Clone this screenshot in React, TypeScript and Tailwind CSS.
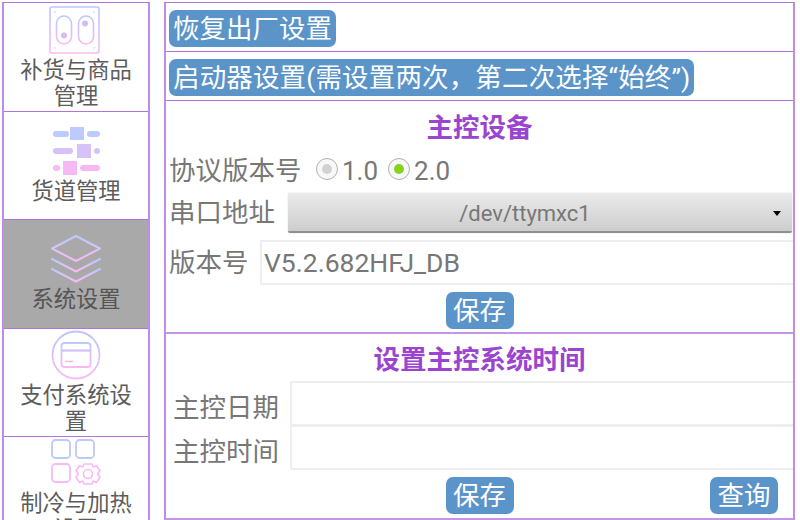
import type { ReactNode } from 'react';

const fontStack = 'font-["Roboto","Noto_Sans_CJK_SC",sans-serif]';

function Grad({ id }: { id: string }) {
  return (
    <defs>
      <linearGradient id={id} x1="0" y1="0" x2="0" y2="1">
        <stop offset="0" stopColor="#b9c9fe" />
        <stop offset="1" stopColor="#fab8f3" />
      </linearGradient>
    </defs>
  );
}

function SlotIcon() {
  return (
    <svg width="52" height="48" viewBox="0 0 52 48" fill="none">
      <Grad id="g1" />
      <g stroke="url(#g1)" strokeWidth="1.6">
        <rect x="1" y="1" width="49" height="46" rx="2" />
        <rect x="7.5" y="10" width="15" height="28" rx="7.5" />
        <rect x="29.5" y="10" width="15" height="28" rx="7.5" />
      </g>
      <circle cx="15" cy="29.5" r="3" fill="#d9b9f8" />
      <circle cx="36" cy="17.5" r="3" fill="#cdbdfa" />
      <circle cx="6" cy="6" r="0.8" fill="#c5c4fb" />
      <circle cx="45" cy="6" r="0.8" fill="#c5c4fb" />
      <circle cx="6" cy="42" r="0.8" fill="#f0baf5" />
      <circle cx="45" cy="42" r="0.8" fill="#f0baf5" />
    </svg>
  );
}

function ChannelIcon() {
  return (
    <svg width="48" height="48" viewBox="0 0 48 48">
      <rect x="0" y="4" width="16" height="6" rx="3" fill="#bccafe" />
      <rect x="17" y="0" width="14" height="13" fill="#bccafe" />
      <rect x="34" y="4" width="13" height="6" rx="3" fill="#bccafe" />
      <rect x="0" y="21" width="20" height="6" rx="3" fill="#d6c1f9" />
      <rect x="24" y="17" width="14" height="14" fill="#d6c1f9" />
      <rect x="41" y="21" width="6" height="6" rx="3" fill="#d6c1f9" />
      <rect x="0" y="38" width="7" height="6" rx="3" fill="#f6b9f4" />
      <rect x="10" y="34" width="14" height="14" fill="#f6b9f4" />
      <rect x="27" y="38" width="20" height="6" rx="3" fill="#f6b9f4" />
    </svg>
  );
}

function LayersIcon() {
  return (
    <svg width="50" height="48" viewBox="0 0 50 48" fill="none">
      <Grad id="g3" />
      <g stroke="url(#g3)" strokeWidth="2" strokeLinejoin="round" strokeLinecap="round">
        <path d="M25 1 L49 13.5 L25 26 L1 13.5 Z" />
        <path d="M1 24 L25 36.5 L49 24" />
        <path d="M1 34 L25 46.5 L49 34" />
      </g>
    </svg>
  );
}

function PayIcon() {
  return (
    <svg width="50" height="50" viewBox="0 0 50 50" fill="none">
      <Grad id="g4" />
      <g stroke="url(#g4)" strokeWidth="1.8">
        <circle cx="25" cy="25" r="23.5" />
        <rect x="10.5" y="13" width="29" height="24" rx="3" />
      </g>
      <path d="M10.5 20.5 H39.5" stroke="#cfc0fa" strokeWidth="2.2" />
      <path d="M14 31.5 H22" stroke="#e6bcf7" strokeWidth="1.6" />
    </svg>
  );
}

function CoolIcon() {
  return (
    <svg width="50" height="46" viewBox="0 0 50 46" fill="none">
      <g stroke="#bdc8fd" strokeWidth="1.8">
        <rect x="1" y="1" width="18" height="18" rx="3.5" />
        <rect x="25" y="1" width="18" height="18" rx="3.5" />
      </g>
      <rect x="1" y="25" width="18" height="18" rx="3.5" stroke="#f6baf4" strokeWidth="1.8" />
      <path
        d="M33 25 H41 L42 28 L45.5 26.5 L49 32 L46.5 35 L49 38 L45.5 43.5 L42 42 L41 45 H33 L32 42 L28.5 43.5 L25 38 L27.5 35 L25 32 L28.5 26.5 L32 28 Z"
        stroke="#f6baf4"
        strokeWidth="1.6"
        strokeLinejoin="round"
      />
      <circle cx="37" cy="35" r="4.5" stroke="#f6baf4" strokeWidth="1.6" />
    </svg>
  );
}

function NavItem({ icon, label, active, iconClass }: { icon: ReactNode; label: string; active?: boolean; iconClass: string }) {
  return (
    <div className={`h-[108.5px] shrink-0 overflow-hidden border-b border-[#b174de] flex flex-col items-center ${active ? 'bg-[#a9a9a9] text-[#565656]' : 'text-[#5c5c5c]'}`}>
      <div className={`shrink-0 ${iconClass}`}>{icon}</div>
      <div className="text-[22.3px] leading-[26px] text-center w-[114px]">{label}</div>
    </div>
  );
}

function Btn({ children, wide, className = '' }: { children: ReactNode; wide?: boolean; className?: string }) {
  return (
    <button className={`h-[37px] rounded-[7px] bg-[#5a94c8] text-white text-[26.5px] leading-[37px] whitespace-nowrap ${wide ? 'px-[4px]' : 'px-[7.5px]'} ${className}`}>
      {children}
    </button>
  );
}

function Radio({ checked, label }: { checked?: boolean; label: string }) {
  return (
    <div className="flex items-center">
      <span className="w-[22px] h-[22px] rounded-full border border-[#b0b0b0] bg-[#f8f8f8] flex items-center justify-center -mt-[4px]">
        <span className={`w-[10px] h-[10px] rounded-full ${checked ? 'bg-[#86d21c]' : 'bg-[#d2d2d2]'}`} />
      </span>
      <span className="ml-[4px] text-[26px] leading-[30px] text-[#777]">{label}</span>
    </div>
  );
}

function Field({ value }: { value?: string }) {
  return (
    <div className="h-[45px] flex-1 self-start border-2 border-r-0 border-[#eeeeee] pl-[2px] text-[26.5px] leading-[41px] text-[#777]">{value}</div>
  );
}

export default function App() {
  return (
    <div className={`w-[800px] h-[520px] overflow-hidden bg-white flex pt-[2px] pl-[2px] ${fontStack}`}>
      <div className="w-[148px] shrink-0 h-[530px] border-x-2 border-t border-x-[#bf8ce6] border-t-[#b174de]">
        <NavItem icon={<SlotIcon />} label="补货与商品管理" iconClass="mt-[3px] mb-[3px] -ml-[2px]" />
        <NavItem icon={<ChannelIcon />} label="货道管理" iconClass="mt-[15px] mb-[3px] ml-[1px]" />
        <NavItem icon={<LayersIcon />} label="系统设置" active iconClass="mt-[15px] mb-[3px]" />
        <NavItem icon={<PayIcon />} label="支付系统设置" iconClass="mt-[1px] mb-[2px]" />
        <NavItem icon={<CoolIcon />} label="制冷与加热设置" iconClass="mt-[2px] mb-[5px]" />
      </div>
      <div className="ml-[14px] w-[631px] shrink-0 h-[518px] border-x-2 border-t border-x-[#bf8ce6] border-t-[#b174de] flex flex-col">
        <div className="h-[49px] shrink-0 border-b border-[#b174de] pl-[3px] pt-[7px]">
          <Btn wide>恢复出厂设置</Btn>
        </div>
        <div className="h-[49px] shrink-0 border-b border-[#b174de] pl-[3px] pt-[7px]">
          <Btn wide className="tracking-[0.15px]">启动器设置(需设置两次，第二次选择“始终”)</Btn>
        </div>
        <div className="h-[233px] shrink-0 border-b-2 border-[#c596e8] flex flex-col">
          <div className="h-[52px] pt-[2px] shrink-0 flex items-center justify-center text-[26.5px] font-bold text-[#9b44cf]">主控设备</div>
          <div className="h-[36px] shrink-0 flex items-center pl-[3px]">
            <span className="text-[26.5px] text-[#777] w-[147px]">协议版本号</span>
            <Radio label="1.0" />
            <div className="w-[10px]" />
            <Radio checked label="2.0" />
          </div>
          <div className="h-[40px] mt-[4px] shrink-0 flex items-center pl-[3px]">
            <span className="text-[26.5px] text-[#777] w-[119px] shrink-0">串口地址</span>
            <div className="relative h-[40px] w-[504px] rounded-[2px] bg-gradient-to-b from-[#ebebeb] to-[#cdcdcd] border-b-2 border-[#8f8f8f] shadow-[0_0_1px_#999] flex items-center justify-center pr-[30px] pt-[3px] text-[22px] text-[#777]">
              /dev/ttymxc1
              <span className="absolute right-[11px] top-[18px] w-0 h-0 border-x-[4px] border-t-[5px] border-x-transparent border-t-black" />
            </div>
          </div>
          <div className="mt-[7px] h-[45px] shrink-0 flex items-center pl-[3px]">
            <span className="text-[26.5px] text-[#777] w-[91px] shrink-0">版本号</span>
            <Field value="V5.2.682HFJ_DB" />
          </div>
          <div className="mt-[7px] flex justify-center">
            <Btn>保存</Btn>
          </div>
        </div>
        <div className="h-[186px] shrink-0 border-b-2 border-[#c596e8] flex flex-col">
          <div className="h-[47px] pt-[5px] shrink-0 flex items-center justify-center text-[26.5px] font-bold text-[#9b44cf]">设置主控系统时间</div>
          <div className="h-[44px] shrink-0 flex items-start pl-[7px]">
            <span className="text-[26.5px] text-[#777] w-[117px] shrink-0 pt-[7px]">主控日期</span>
            <Field />
          </div>
          <div className="h-[44px] shrink-0 flex items-start pl-[7px]">
            <span className="text-[26.5px] text-[#777] w-[117px] shrink-0 pt-[7px]">主控时间</span>
            <Field />
          </div>
          <div className="mt-[8px] relative flex justify-center">
            <Btn>保存</Btn>
            <div className="absolute right-[15px] top-0">
              <Btn>查询</Btn>
            </div>
          </div>
        </div>
      </div>
    </div>
  );
}
